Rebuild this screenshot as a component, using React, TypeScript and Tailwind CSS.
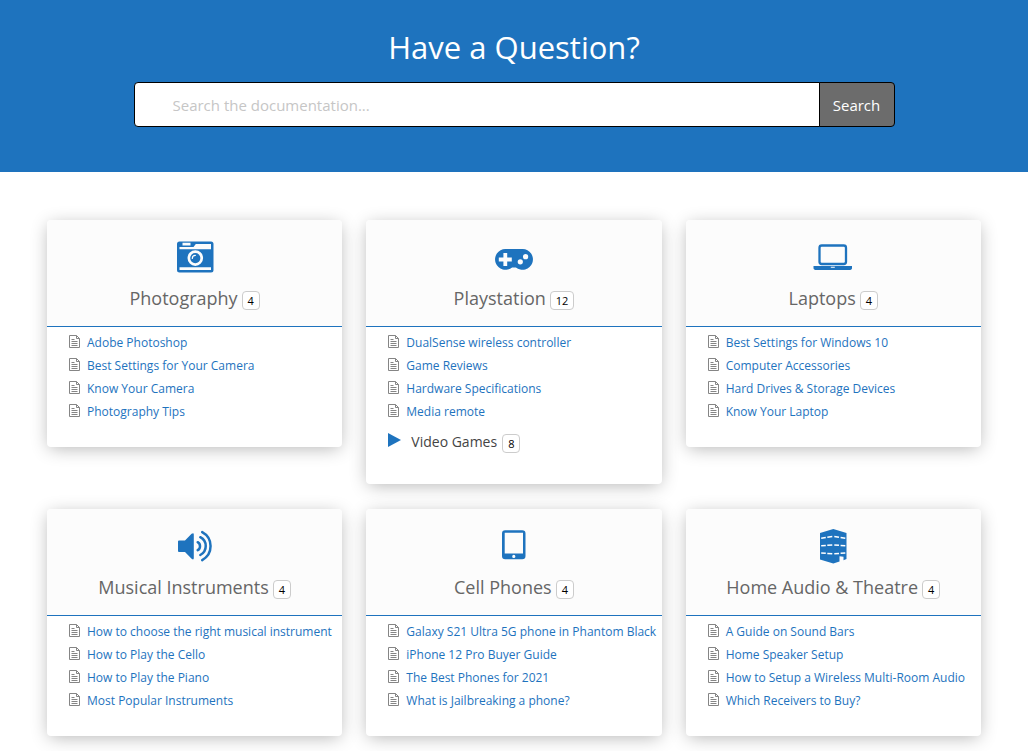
import React from "react";

const CameraIcon = () => (
  <svg viewBox="0 0 40 36" className="h-9 w-10" aria-hidden="true">
    <path
      fill="currentColor"
      fillRule="evenodd"
      d="M4.5 2.5h31.5q2.5 0 2.5 2.5v26q0 2.500-2.500 2.500H4.500Q2 33.500 2 31V5q0-2.500 2.500-2.500zM7.500 3.800v2.600h8V3.800zM4.500 8v2.300h31.500V5H20.800L18.500 8zM4.500 28.300v2.700h31.500v-2.700zM20.300 11.300a7.800 7.800 0 1 0 0 15.600a7.800 7.800 0 1 0 0-15.600zM20.300 14a5.100 5.100 0 1 1 0 10.200a5.100 5.100 0 1 1 0-10.200z"
    />
    <path d="M17.300 19.400q0-3 3-3" fill="none" stroke="white" strokeWidth="1.200" strokeLinecap="round" />
  </svg>
);

const GamepadIcon = () => (
  <svg viewBox="0 0 40 36" className="h-9 w-10" aria-hidden="true">
    <path
      fill="currentColor"
      fillRule="evenodd"
      d="M11.300 10h17.400a10.400 10.400 0 1 1-6.800 18.400h-3.800A10.400 10.400 0 1 1 11.300 10zM9.400 14v4.600H4.800v3.800h4.600V27h3.800v-4.600h4.600v-3.800h-4.600V14zM26.300 20.200a2.600 2.600 0 1 0 0 5.200a2.600 2.600 0 1 0 0-5.200zM31.600 15.100a2.600 2.600 0 1 0 0 5.200a2.600 2.600 0 1 0 0-5.200z"
    />
  </svg>
);

const LaptopIcon = () => (
  <svg viewBox="0 0 40 36" className="h-9 w-10" aria-hidden="true">
    <rect x="6.500" y="6.500" width="26.500" height="18.500" rx="2.300" fill="none" stroke="currentColor" strokeWidth="2.300" />
    <path
      fill="currentColor"
      fillRule="evenodd"
      d="M.5 27h38.500v1.900q0 2-3 2h-32.500q-3 0-3-2zM17.800 27.800v.9h4v-.9z"
    />
  </svg>
);

const SpeakerIcon = () => (
  <svg viewBox="0 0 40 36" className="h-9 w-10" aria-hidden="true">
    <path fill="currentColor" d="M4 12.500h6L16.600 5.800q2.200-1.600 2.200.8v23.400q0 2.400-2.200.8L10 24H4q-1 0-1-1v-9.500q0-1 1-1z" />
    <g fill="none" stroke="currentColor" strokeWidth="2.500" strokeLinecap="round">
      <path d="M22.700 14.200a4.600 4.600 0 0 1 0 8" />
      <path d="M25.300 9.200a10 10 0 0 1 0 17.800" />
      <path d="M27.200 4.100a15.900 15.900 0 0 1 0 28" />
    </g>
  </svg>
);

const TabletIcon = () => (
  <svg viewBox="0 0 40 36" className="h-9 w-10" aria-hidden="true">
    <path
      fill="currentColor"
      fillRule="evenodd"
      d="M11.200 2.200h17q3.300 0 3.300 3.300v22.500q0 3.300-3.300 3.300h-17Q8 31.300 8 28V5.500q0-3.300 3.200-3.300zM10.700 4.700v20.800h18.300V4.700zM19.800 26.800a1.600 1.600 0 1 0 0 3.200a1.600 1.600 0 1 0 0-3.200z"
    />
  </svg>
);

const BuildingIcon = () => (
  <svg viewBox="0 0 40 36" className="h-9 w-10" aria-hidden="true">
    <path fill="currentColor" d="M20.300 1L33.500 5v26l-3 1.300v-3.600l-4-.4v5.200L20.300 35.500 7 31.500V5z" />
    <g fill="none" stroke="white" strokeWidth="1.500">
      <path d="M8.200 10.300l4.600-.7M14.300 9.300l5-.8M21.300 8.500l4.700.8M27.600 9.600l4.700.7" />
      <path d="M8.200 17.700l4.600-.3M14.300 17.300l5-.4M21.300 16.900l4.700.4M27.600 17.400l4.700.3" />
      <path d="M8.200 24.900l4.600.4M14.300 25.400l5 .4M21.300 25.800l4.700-.4M27.600 25.300l4.700-.4" />
    </g>
  </svg>
);

const DocumentIcon = () => (
  <svg viewBox="0 0 11 13" className="mb-[2px] h-[13px] w-[11px] shrink-0 text-[#858585]" aria-hidden="true">
    <path d="M.5.5h7l3 3v9H.5zM7.500.5v3h3" fill="none" stroke="currentColor" />
    <path d="M2.500 4.500h3M2.500 6.500h6M2.500 8.500h6M2.500 10.500h6" stroke="currentColor" />
  </svg>
);

type Category = {
  title: string;
  count: number;
  Icon: () => React.JSX.Element;
  articles: string[];
  sub?: { title: string; count: number };
};

const categories: Category[] = [
  {
    title: "Photography",
    count: 4,
    Icon: CameraIcon,
    articles: ["Adobe Photoshop", "Best Settings for Your Camera", "Know Your Camera", "Photography Tips"],
  },
  {
    title: "Playstation",
    count: 12,
    Icon: GamepadIcon,
    articles: ["DualSense wireless controller", "Game Reviews", "Hardware Specifications", "Media remote"],
    sub: { title: "Video Games", count: 8 },
  },
  {
    title: "Laptops",
    count: 4,
    Icon: LaptopIcon,
    articles: [
      "Best Settings for Windows 10",
      "Computer Accessories",
      "Hard Drives & Storage Devices",
      "Know Your Laptop",
    ],
  },
  {
    title: "Musical Instruments",
    count: 4,
    Icon: SpeakerIcon,
    articles: [
      "How to choose the right musical instrument",
      "How to Play the Cello",
      "How to Play the Piano",
      "Most Popular Instruments",
    ],
  },
  {
    title: "Cell Phones",
    count: 4,
    Icon: TabletIcon,
    articles: [
      "Galaxy S21 Ultra 5G phone in Phantom Black",
      "iPhone 12 Pro Buyer Guide",
      "The Best Phones for 2021",
      "What is Jailbreaking a phone?",
    ],
  },
  {
    title: "Home Audio & Theatre",
    count: 4,
    Icon: BuildingIcon,
    articles: [
      "A Guide on Sound Bars",
      "Home Speaker Setup",
      "How to Setup a Wireless Multi-Room Audio",
      "Which Receivers to Buy?",
    ],
  },
];

const Count = ({ value }: { value: number }) => (
  <span className="mt-1 rounded-[4px] border border-[#ccc] bg-white px-[5px] text-[11px] leading-[17px] text-black">
    {value}
  </span>
);

const CategoryCard = ({ title, count, Icon, articles, sub }: Category) => (
  <section className="rounded-[4px] bg-white pb-6 shadow-[0_3px_18px_-2px_rgba(0,0,0,0.3)]">
    <header className="flex flex-col items-center rounded-t-[4px] bg-[#fcfcfc] pt-[19px] text-[#1e73be]">
      <Icon />
      <div className="mt-[7px] mb-3 flex h-8 items-center gap-1">
        <h2 className="text-[18px] leading-8 text-[#666]">{title}</h2>
        <Count value={count} />
      </div>
      <div className="h-px w-full bg-[#1e73be]" />
    </header>
    <ul className="pt-1 pl-[22px]">
      {articles.map((article) => (
        <li key={article} className="flex h-[23px] items-center gap-[7px]">
          <DocumentIcon />
          <a href="#" className="whitespace-nowrap text-[12px] leading-[23px] text-[#1e73be]">
            {article}
          </a>
        </li>
      ))}
      {sub && (
        <li className="flex h-[37px] items-center">
          <button type="button" className="flex items-center">
            <svg viewBox="0 0 13 14" className="mb-1 h-[14px] w-[13px] text-[#1e73be]" aria-hidden="true">
              <path d="M0 0l13 7-13 7z" fill="currentColor" />
            </svg>
            <span className="mr-[5px] ml-[10px] text-[14px] leading-5 text-[#444]">{sub.title}</span>
            <Count value={sub.count} />
          </button>
        </li>
      )}
    </ul>
  </section>
);

export default function App() {
  return (
    <div className="min-h-screen bg-white font-['Open_Sans','Noto_Sans',sans-serif]">
      <div className="bg-[#1e73be] px-4 pt-6 pb-[45px]">
        <h1 className="text-center text-[31px] leading-[46px] text-white">Have a Question?</h1>
        <form
          className="mx-auto mt-3 flex h-[45px] max-w-[761px]"
          role="search"
          onSubmit={(event) => event.preventDefault()}
        >
          <input
            type="search"
            aria-label="Search the documentation"
            placeholder="Search the documentation..."
            className="min-w-0 flex-1 rounded-l-[4px] border border-black bg-white pt-px pr-4 pl-[38px] text-[15px] text-[#444] outline-none placeholder:text-[#c6c6c6]"
          />
          <button
            type="submit"
            className="-ml-px w-[76px] rounded-r-[4px] border border-black bg-[#6c6c6c] pt-px text-[15px] text-white"
          >
            Search
          </button>
        </form>
      </div>
      <main className="grid grid-cols-3 items-start gap-x-6 gap-y-[25px] px-[47px] pt-12 pb-4">
        {categories.map((category) => (
          <CategoryCard key={category.title} {...category} />
        ))}
      </main>
    </div>
  );
}
